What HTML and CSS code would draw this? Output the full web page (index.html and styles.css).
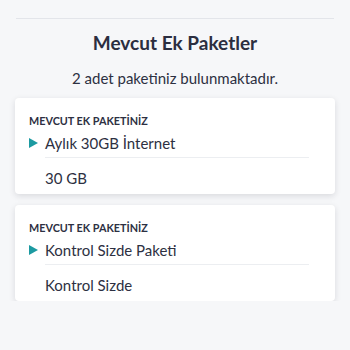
FILE: index.html
```html
<!DOCTYPE html>
<html lang="tr">
<head>
<meta charset="utf-8">
<link rel="stylesheet" href="styles.css">
</head>
<body>
<div class="page">
  <div class="rule"></div>
  <h1 class="title">Mevcut Ek Paketler</h1>
  <p class="subtitle">2 adet paketiniz bulunmaktadır.</p>
  <div class="card">
    <div class="label">MEVCUT EK PAKETİNİZ</div>
    <div class="item"><span class="tri"></span><span>Aylık 30GB İnternet</span></div>
    <div class="sep"></div>
    <div class="value">30 GB</div>
  </div>
  <div class="card">
    <div class="label">MEVCUT EK PAKETİNİZ</div>
    <div class="item"><span class="tri"></span><span>Kontrol Sizde Paketi</span></div>
    <div class="sep"></div>
    <div class="value">Kontrol Sizde</div>
  </div>
</div>
</body>
</html>
```
FILE: styles.css
```css
html, body {
  margin: 0;
  padding: 0;
  background: #f6f7f9;
  font-family: "Lato", "Open Sans", sans-serif;
  color: #2d3042;
}
.page {
  padding: 18px 15px 0;
}
.rule {
  border-top: 1px solid #e3e5ea;
  margin: 0 1px;
}
.title {
  margin: 12px 0 0;
  font-size: 19px;
  line-height: 24px;
  font-weight: 700;
  text-align: center;
  color: #2b2e40;
}
.subtitle {
  margin: 13px 0 0;
  font-size: 15px;
  line-height: 20px;
  text-align: center;
  color: #2d3042;
}
.card {
  margin-top: 10px;
  background: #fff;
  border-radius: 4px;
  box-shadow: 0 2px 6px rgba(20, 25, 40, 0.13);
  padding: 16px 14px 6px;
}
.card + .card {
  margin-top: 11px;
}
.label {
  font-size: 10.8px;
  line-height: 14px;
  font-weight: 700;
  color: #2d3042;
}
.item {
  margin-top: 5px;
  display: flex;
  align-items: center;
  font-size: 15px;
  line-height: 20px;
}
.tri {
  width: 0;
  height: 0;
  border-top: 5px solid transparent;
  border-bottom: 5px solid transparent;
  border-left: 9px solid #1c9aa1;
  margin-right: 7px;
}
.sep {
  margin: 4px 12px 0 16px;
  border-top: 1px solid #eceef1;
}
.value {
  margin: 10px 0 0 16px;
  font-size: 15px;
  line-height: 20px;
}
```
